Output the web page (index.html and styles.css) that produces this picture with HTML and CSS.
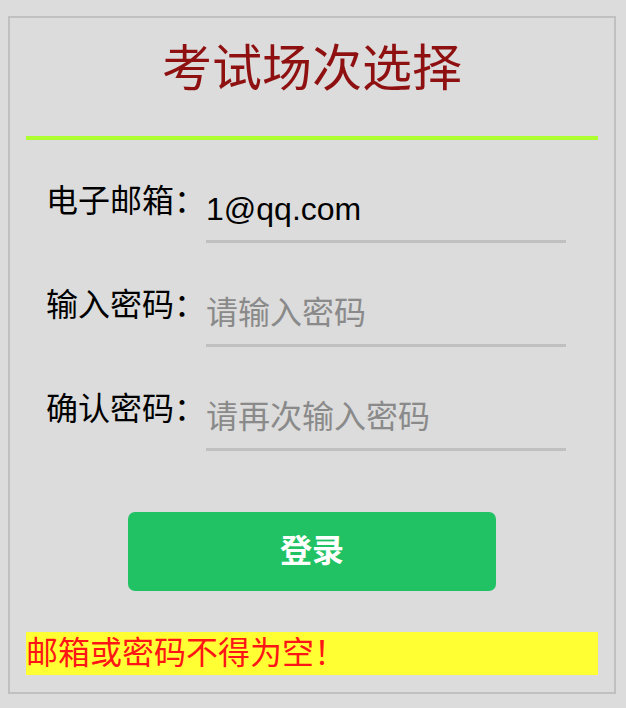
FILE: index.html
```html
<!DOCTYPE html>
<html lang="zh-CN">
<head>
<meta charset="utf-8">
<title>考试场次选择</title>
<link rel="stylesheet" href="styles.css">
</head>
<body>
<div class="panel">
  <h1 class="title">考试场次选择</h1>
  <form class="form">
    <div class="row">
      <label class="label">电子邮箱：</label>
      <input class="field" type="text" value="1@qq.com">
    </div>
    <div class="row">
      <label class="label">输入密码：</label>
      <input class="field" type="password" placeholder="请输入密码">
    </div>
    <div class="row">
      <label class="label">确认密码：</label>
      <input class="field" type="password" placeholder="请再次输入密码">
    </div>
    <button class="login-btn" type="button">登录</button>
  </form>
  <div class="error">邮箱或密码不得为空！</div>
</div>
</body>
</html>
```

FILE: styles.css
```css
html, body {
  margin: 0;
  padding: 0;
}
body {
  background: #dcdcdc;
  font-family: "Liberation Sans", "Noto Sans CJK SC", sans-serif;
  padding: 16px 10px 0 8px;
}
.panel {
  box-sizing: border-box;
  width: 608px;
  border: 2px solid #c0c0c0;
  padding: 0 16px 17px;
}
.title {
  margin: 0;
  padding: 16px 0 32px;
  font-size: 50px;
  line-height: 70px;
  font-weight: normal;
  text-align: center;
  color: #8e1010;
  border-bottom: 4px solid #adff2f;
}
.form {
  margin: 0;
  padding-top: 41px;
}
.row {
  display: flex;
  align-items: flex-start;
  padding-left: 20px;
  margin-bottom: 42px;
}
.row:last-of-type {
  margin-bottom: 0;
}
.label {
  width: 160px;
  flex: none;
  white-space: nowrap;
  font-size: 32px;
  line-height: 40px;
  color: #000;
}
.field {
  box-sizing: content-box;
  width: 360px;
  height: 40px;
  margin: 0;
  padding: 8px 0 11px;
  border: none;
  border-bottom: 3px solid #c0c0c0;
  background: transparent;
  outline: none;
  font-family: "Liberation Sans", "Noto Sans CJK SC", sans-serif;
  font-size: 32px;
  line-height: 40px;
  color: #000;
}
.field::placeholder {
  color: #8a8a8a;
}
.login-btn {
  display: block;
  width: 368px;
  height: 79px;
  margin: 61px auto 0;
  padding: 0;
  border: none;
  border-radius: 7px;
  background: #20c264;
  color: #fff;
  font-family: "Liberation Sans", "Noto Sans CJK SC", sans-serif;
  font-size: 32px;
  font-weight: bold;
  line-height: 79px;
}
.error {
  margin-top: 41px;
  background: #ffff33;
  color: #ff1515;
  font-size: 32px;
  line-height: 43px;
  height: 43px;
}
```
